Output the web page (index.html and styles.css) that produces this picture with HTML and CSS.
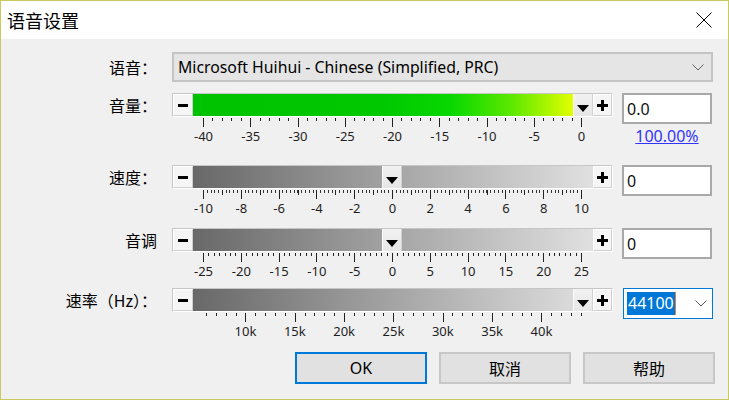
FILE: index.html
```html
<!doctype html>
<html>
<head>
    <meta charset="utf-8">
    <title>语音设置</title>
    <link rel="stylesheet" href="styles.css">
</head>
<body>
    <!-- 对话框 -->
    <div class="dialog">
        <!-- 标题栏 -->
        <div class="titleBar">
            <span class="titleText">语音设置</span>
            <svg class="closeBtn" width="16" height="16" viewBox="0 0 16 16">
                <path d="M0.5 0.5L15.5 15.5M15.5 0.5L0.5 15.5" stroke="#000" stroke-width="1" fill="none"/>
            </svg>
        </div>

        <div class="form">
            <!-- 语音 -->
            <div class="rowLabel comboLabel">语音：</div>
            <div class="voiceBox">
                <span>Microsoft Huihui - Chinese (Simplified, PRC)</span>
                <svg class="chevron" width="12" height="7" viewBox="0 0 12 7">
                    <path d="M0.5 0.5L6 6L11.5 0.5" stroke="#606060" stroke-width="1" fill="none"/>
                </svg>
            </div>

            <!-- 音量 -->
            <div class="rowLabel">音量：</div>
            <div class="slider">
                <div class="sliderBox">
                    <div class="stepBtn minus"></div>
                    <div class="track">
                        <div class="volumeFill" style="width:380px"></div>
                        <div class="thumb" style="left:380px"></div>
                    </div>
                    <div class="stepBtn plus"></div>
                </div>
                <div class="ticks ticksVolume"></div>
                <div class="scaleText scaleWide">
                    <span>-40</span><span>-35</span><span>-30</span><span>-25</span><span>-20</span>
                    <span>-15</span><span>-10</span><span>-5</span><span>0</span>
                </div>
            </div>
            <div class="valueCol">
                <input class="valueBox" type="text" value="0.0">
                <a class="percentLink" href="#">100.00%</a>
            </div>

            <!-- 速度 -->
            <div class="rowLabel">速度：</div>
            <div class="slider">
                <div class="sliderBox">
                    <div class="stepBtn minus"></div>
                    <div class="track grayTrack">
                        <div class="thumb" style="left:189px"></div>
                    </div>
                    <div class="stepBtn plus"></div>
                </div>
                <div class="ticks ticksSpeed"></div>
                <div class="scaleText scaleWide">
                    <span>-10</span><span>-8</span><span>-6</span><span>-4</span><span>-2</span><span>0</span>
                    <span>2</span><span>4</span><span>6</span><span>8</span><span>10</span>
                </div>
            </div>
            <div class="valueCol">
                <input class="valueBox" type="text" value="0">
            </div>

            <!-- 音调 -->
            <div class="rowLabel">音调</div>
            <div class="slider">
                <div class="sliderBox">
                    <div class="stepBtn minus"></div>
                    <div class="track grayTrack">
                        <div class="thumb" style="left:189px"></div>
                    </div>
                    <div class="stepBtn plus"></div>
                </div>
                <div class="ticks ticksPitch"></div>
                <div class="scaleText scaleWide">
                    <span>-25</span><span>-20</span><span>-15</span><span>-10</span><span>-5</span><span>0</span>
                    <span>5</span><span>10</span><span>15</span><span>20</span><span>25</span>
                </div>
            </div>
            <div class="valueCol">
                <input class="valueBox" type="text" value="0">
            </div>

            <!-- 速率 -->
            <div class="rowLabel">速率（Hz）：</div>
            <div class="slider">
                <div class="sliderBox">
                    <div class="stepBtn minus"></div>
                    <div class="track grayTrack">
                        <div class="thumb" style="left:380px"></div>
                    </div>
                    <div class="stepBtn plus"></div>
                </div>
                <div class="ticks ticksRate"></div>
                <div class="scaleText scaleRate">
                    <span>10k</span><span>15k</span><span>20k</span><span>25k</span>
                    <span>30k</span><span>35k</span><span>40k</span>
                </div>
            </div>
            <div class="valueCol">
                <div class="rateBox">
                    <span class="selected">44100</span><span class="caret"></span>
                    <svg class="chevron" width="12" height="7" viewBox="0 0 12 7">
                        <path d="M0.5 0.5L6 6L11.5 0.5" stroke="#555" stroke-width="1" fill="none"/>
                    </svg>
                </div>
            </div>
        </div>

        <!-- 按钮 -->
        <div class="buttons">
            <button class="btn btnDefault">OK</button>
            <button class="btn">取消</button>
            <button class="btn">帮助</button>
        </div>
    </div>
</body>
</html>
```

FILE: styles.css
```css
*{margin: 0;padding: 0;box-sizing: border-box;}
body{background: #f0f0f0;font-family: "Noto Sans","Noto Sans CJK SC",sans-serif;color: #000;}

.dialog{
    width: 729px;height: 400px;border: 1px solid #c9ca5e;
    background: #f0f0f0;display: flex;flex-direction: column;
}
.titleBar{
    height: 38px;background: #fff;display: flex;align-items: center;
    justify-content: space-between;padding: 0 16px 0 6px;
}
.titleText{font-family: "Noto Sans CJK SC",sans-serif;font-size: 18px;}
.closeBtn{display: block;}

/* 表单区：标签 / 滑块 / 数值 三列 */
.form{
    display: grid;margin-top: 13px;
    grid-template-columns: 171px 441px 100px;
    grid-template-rows: 41px 72px 63px 60px 64px;
}
.rowLabel{
    font-family: "Noto Sans CJK SC",sans-serif;font-size: 16px;
    line-height: 24px;text-align: right;padding-right: 15px;white-space: nowrap;
}
.comboLabel{line-height: 30px;}

.voiceBox{
    grid-column: 2 / 4;height: 30px;width: 541px;
    background: #e5e5e5;border: 2px solid #c4c4c4;
    display: flex;align-items: center;justify-content: space-between;
    padding: 0 7px 0 4px;font-size: 15.8px;
}
.chevron{display: block;}

/* 滑块 */
.slider{width: 441px;}
.sliderBox{
    height: 24px;display: flex;border: 1px solid;
    border-color: #c6c6c6 #fff #fff #c6c6c6;
}
.stepBtn{
    width: 20px;background: #f5f5f5;display: grid;place-items: center;
    border: 1px solid;border-color: #fff #cfcfcf #cfcfcf #fff;
}
.stepBtn::before,.stepBtn::after{content: "";grid-area: 1 / 1;background: #000;}
.minus::before{width: 10px;height: 3px;}
.minus::after{display: none;}
.plus{width: 19px;}
.plus::before{width: 11px;height: 3px;}
.plus::after{width: 3px;height: 11px;}

.track{flex: 1;position: relative;}
.grayTrack{background: linear-gradient(to right,#686868,#e0e0e0);}
.volumeFill{
    height: 100%;
    background: linear-gradient(to right,#00c200 0%,#00c800 50%,#08d800 68%,#5ee800 84%,#e2ff00 100%);
}
.thumb{
    position: absolute;top: 0;bottom: 0;width: 20px;
    background: linear-gradient(#f2f2f2,#e6e6e6);
    border-left: 1px solid #fafafa;border-right: 1px solid #d2d2d2;
    display: flex;justify-content: center;padding-top: 11px;
}
.thumb::after{
    content: "";width: 0;height: 0;
    border-left: 6px solid transparent;border-right: 6px solid transparent;
    border-top: 7px solid #000;
}

/* 刻度 */
.ticks{height: 9px;margin: 1px 0 0 31px;width: 379px;}
.ticksVolume{
    background:
        repeating-linear-gradient(90deg,#222 0 1px,transparent 1px 47.25px) 0 0 / 100% 9px no-repeat,
        repeating-linear-gradient(90deg,#222 0 1px,transparent 1px 9.45px) 0 0 / 100% 3px no-repeat;
}
.ticksSpeed{
    background:
        repeating-linear-gradient(90deg,#222 0 1px,transparent 1px 37.8px) 0 0 / 100% 9px no-repeat,
        repeating-linear-gradient(90deg,#222 0 1px,transparent 1px 18.9px) 0 0 / 100% 5px no-repeat,
        repeating-linear-gradient(90deg,#333 0 1px,transparent 1px 3.78px) 0 0 / 100% 3px no-repeat;
}
.ticksPitch{
    background:
        repeating-linear-gradient(90deg,#222 0 1px,transparent 1px 37.8px) 0 0 / 100% 9px no-repeat,
        repeating-linear-gradient(90deg,#222 0 1px,transparent 1px 5.4px) 0 0 / 100% 3px no-repeat;
}
.ticksRate{
    margin-left: 34px;width: 376px;
    background:
        repeating-linear-gradient(90deg,transparent 0 39.44px,#222 39.44px 40.44px,transparent 40.44px 49.3px) 0 0 / 100% 9px no-repeat,
        repeating-linear-gradient(90deg,#222 0 1px,transparent 1px 9.86px) 0 0 / 100% 3px no-repeat;
}

.scaleText{display: flex;justify-content: space-between;font-size: 13px;line-height: 18px;color: #1e1e1e;}
.scaleText span{width: 1px;display: flex;justify-content: center;white-space: nowrap;}
.scaleWide{margin-left: 31px;width: 379px;}
.scaleRate{margin-left: 73px;width: 297px;}

/* 数值 */
.valueCol{padding-left: 9px;display: flex;flex-direction: column;align-items: flex-start;}
.valueBox{
    width: 90px;height: 31px;border: 2px solid #a9a9a9;background: #fff;
    font-family: "Noto Sans",sans-serif;font-size: 16px;color: #111;
    padding: 0 3px;outline: none;
}
.percentLink{
    width: 90px;text-align: center;margin-top: 3px;
    font-size: 16px;line-height: 18px;color: #3434ff;text-decoration: underline;
}
.rateBox{
    width: 90px;height: 31px;margin-left: 1px;background: #fff;border: 1px solid #0078d7;
    display: flex;align-items: center;padding: 0 5px 0 3px;font-size: 16px;
}
.rateBox .selected{background: #0078d7;color: #fff;line-height: 23px;padding: 0 1px;}
.rateBox .caret{width: 1px;height: 23px;background: #e0803a;}
.rateBox .chevron{margin-left: auto;}

/* 底部按钮 */
.buttons{display: flex;justify-content: flex-end;gap: 12px;padding-right: 13px;}
.btn{
    width: 132px;height: 32px;background: #e1e1e1;border: 2px solid #c7c7c7;
    font-family: "Noto Sans","Noto Sans CJK SC",sans-serif;font-size: 16px;color: #000;
}
.btnDefault{border-color: #0078d7;}
```
